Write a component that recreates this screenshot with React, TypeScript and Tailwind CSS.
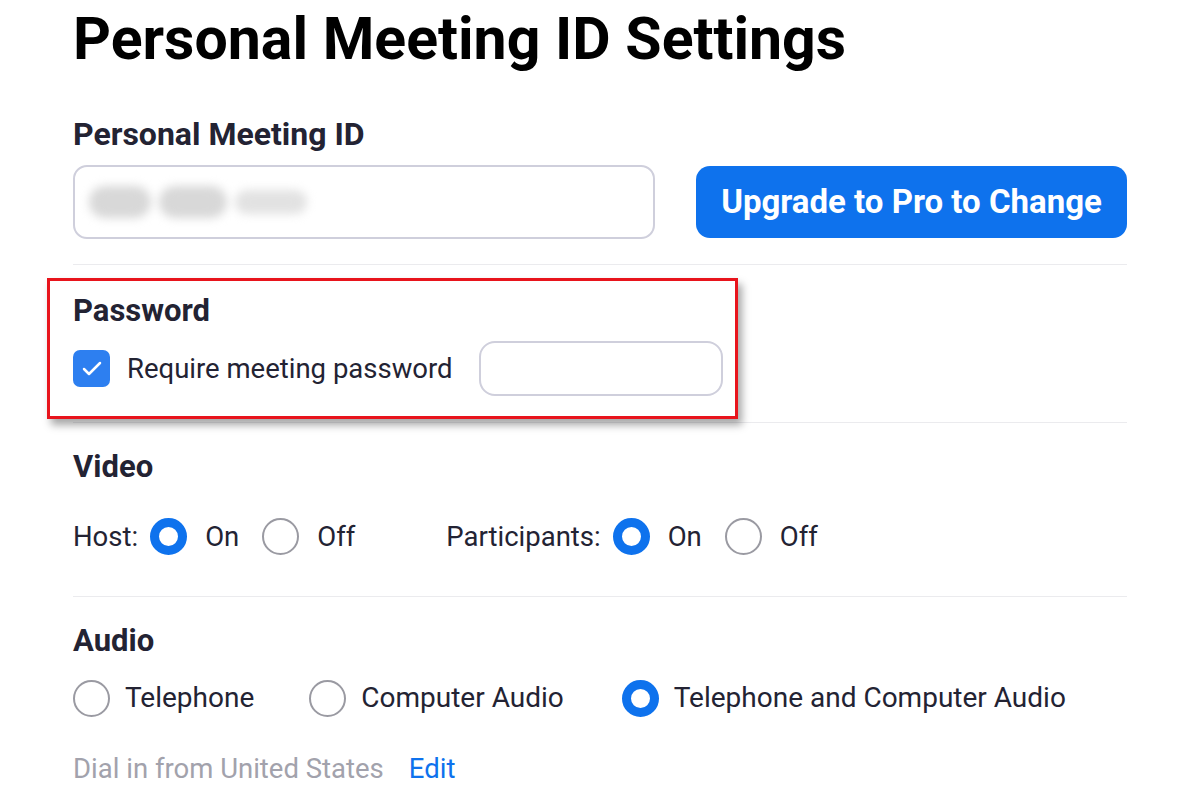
import { Check } from 'lucide-react';

function Radio({ checked }: { checked?: boolean }) {
  return checked ? (
    <span className="w-[37px] h-[37px] rounded-full border-[9px] border-[#0e72ed] bg-white shrink-0" />
  ) : (
    <span className="w-[37px] h-[37px] rounded-full border-2 border-[#9a9aa2] bg-white shrink-0" />
  );
}

function Option({ label, checked, tight }: { label: string; checked?: boolean; tight?: boolean }) {
  return (
    <label className={tight ? 'flex items-center gap-[15px]' : 'flex items-center gap-[18px]'}>
      <Radio checked={checked} />
      <span>{label}</span>
    </label>
  );
}

export default function App() {
  return (
    <div
      className="w-[1200px] h-[800px] bg-white overflow-hidden text-[#232333]"
      style={{ fontFamily: 'Roboto, "Open Sans", sans-serif' }}
    >
      <div className="pl-[73px] w-[1127px]">
        <h1 className="pt-[9px] h-[116px] text-[59px] leading-[60px] font-bold text-black">
          Personal Meeting ID Settings
        </h1>

        <section>
          <h2 className="text-[32px] leading-[36px] font-bold">Personal Meeting ID</h2>
          <div className="mt-[13px] flex items-center gap-[41px]">
            <div className="w-[582px] h-[74px] rounded-[14px] border-2 border-[#cfcfdc] flex items-center px-[14px]">
              <div className="flex items-center gap-[8px] blur-[5px]">
                <span className="w-[62px] h-[32px] rounded-full bg-[#d8d8d8]" />
                <span className="w-[68px] h-[32px] rounded-full bg-[#d8d8d8]" />
                <span className="w-[72px] h-[24px] rounded-full bg-[#e2e2e2]" />
              </div>
            </div>
            <button className="w-[431px] h-[72px] rounded-[14px] bg-[#0e72ed] text-white text-[33px] font-bold">
              Upgrade to Pro to Change
            </button>
          </div>
          <div className="mt-[25px] h-px bg-[#ebebee]" />
        </section>

        <section className="relative">
          <div className="-ml-[26px] mt-[13px] w-[691px] h-[141px] border-[3px] border-[#e8141c] shadow-[4px_6px_8px_rgba(0,0,0,0.35)] pl-[23px] pt-[12px] bg-white relative z-10">
            <h2 className="text-[31px] leading-[36px] font-bold">Password</h2>
            <div className="mt-[12px] flex items-center">
              <span className="w-[37px] h-[37px] rounded-[7px] bg-[#2d7ff0] flex items-center justify-center">
                <Check className="w-[24px] h-[24px] text-white" strokeWidth={2.5} />
              </span>
              <span className="ml-[17px] text-[27.5px]">Require meeting password</span>
              <div className="ml-[26px] w-[244px] h-[55px] rounded-[16px] border-2 border-[#cfcfdc]" />
            </div>
          </div>
          <div className="mt-[3px] h-px bg-[#ebebee]" />
        </section>

        <section className="mt-[26px] text-[27.5px]">
          <h2 className="text-[31px] leading-[36px] font-bold">Video</h2>
          <div className="mt-[31px] flex items-center">
            <span className="mr-[12px]">Host:</span>
            <Option label="On" checked />
            <span className="ml-[23px]">
              <Option label="Off" />
            </span>
            <span className="ml-[91px] mr-[12px]">Participants:</span>
            <Option label="On" checked />
            <span className="ml-[23px]">
              <Option label="Off" />
            </span>
          </div>
          <div className="mt-[39px] h-px bg-[#ebebee]" />
        </section>

        <section className="mt-[26px] text-[28px]">
          <h2 className="text-[31px] leading-[36px] font-bold">Audio</h2>
          <div className="mt-[18px] flex items-center">
            <Option label="Telephone" tight />
            <span className="ml-[55px]">
              <Option label="Computer Audio" tight />
            </span>
            <span className="ml-[58px]">
              <Option label="Telephone and Computer Audio" tight checked />
            </span>
          </div>
          <div className="mt-[29px] flex items-center gap-[25px] text-[#a2a2ac] text-[27.5px]">
            <span>Dial in from United States</span>
            <a className="text-[#0e72ed]">Edit</a>
          </div>
        </section>
      </div>
    </div>
  );
}
